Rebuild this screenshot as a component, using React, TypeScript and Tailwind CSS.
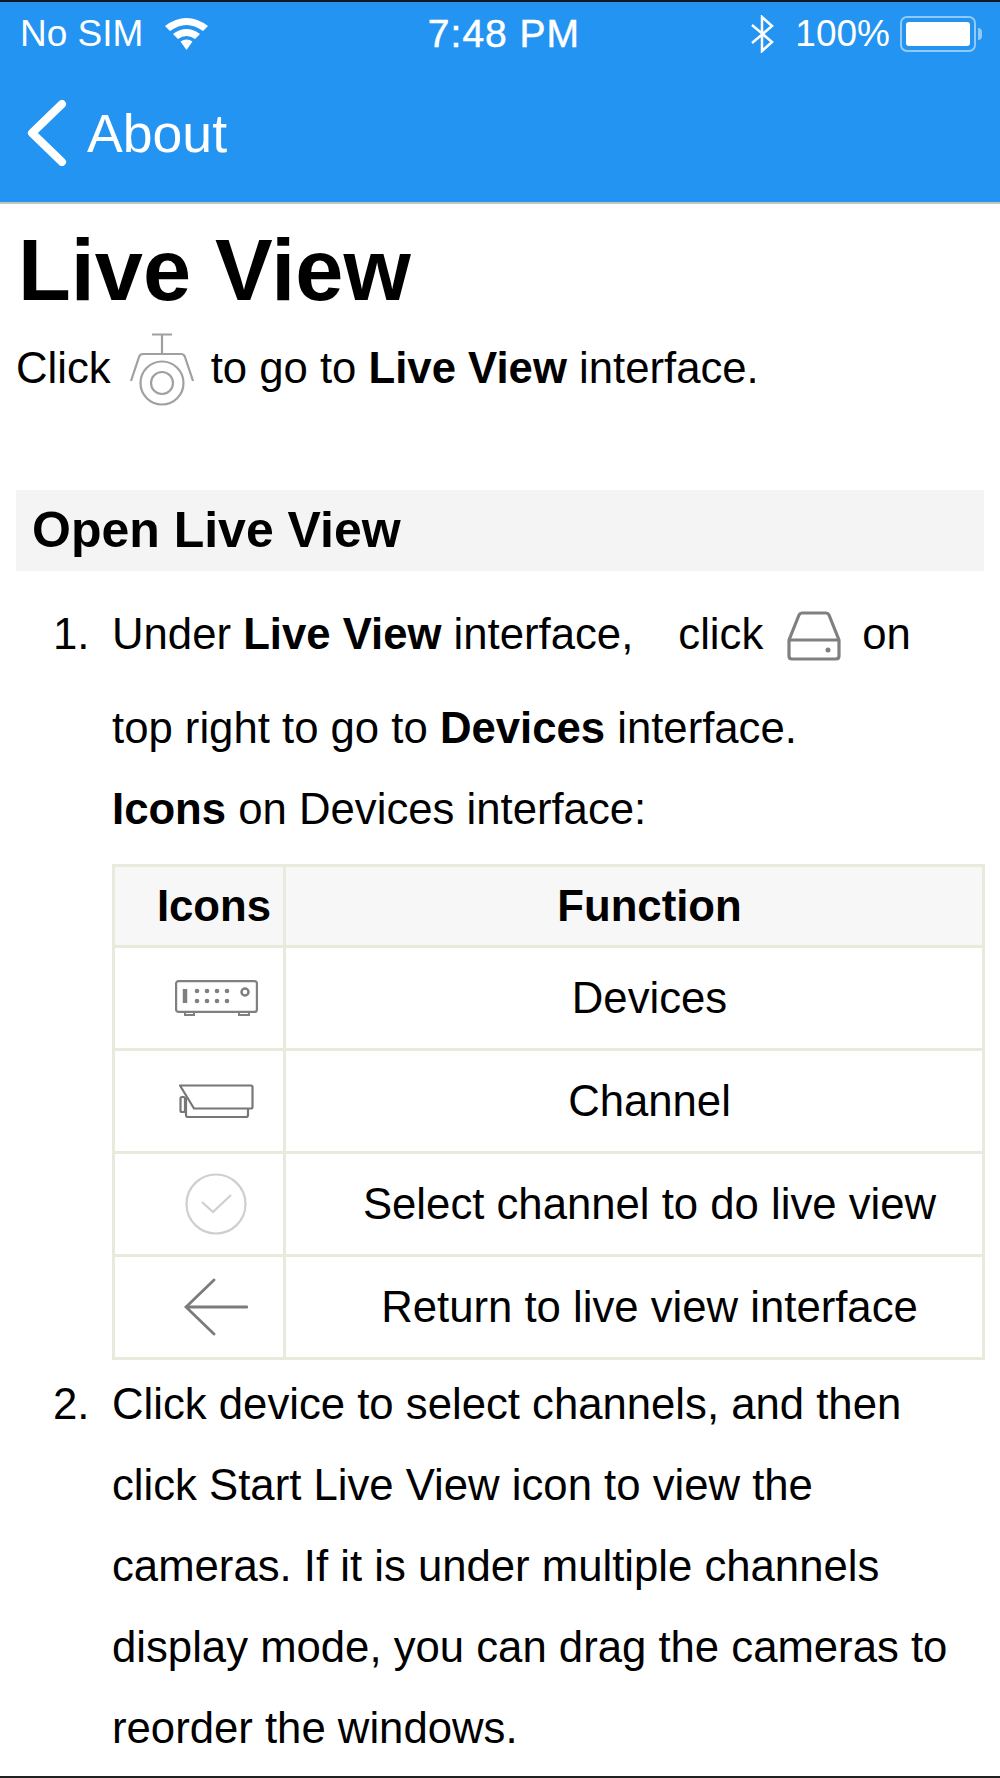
function CameraIcon() {
  return (
    <svg width="64" height="74" viewBox="0 0 64 74" fill="none" stroke="#a0a0a0" strokeWidth="2.2" className="mt-[4px] mr-[17px] ml-[19px] inline-block shrink-0">
      <path d="M22 1.500h20M32 1.500V21" />
      <path d="M1 48 9 24q1-3 4-3h38q3 0 4 3l8 24" />
      <circle cx="32" cy="50" r="21.500" />
      <circle cx="32" cy="50" r="11" />
    </svg>
  );
}

function DriveIcon() {
  return (
    <svg width="54" height="50" viewBox="0 0 54 50" fill="none" stroke="#808080" strokeWidth="3.2" className="shrink-0">
      <path d="M2 29 12 4q1-2 3-2h24q2 0 3 2l10 25v16q0 3-3 3H5q-3 0-3-3z" strokeLinejoin="round" />
      <path d="M2 29h50" />
      <circle cx="41" cy="39" r="2.500" fill="#808080" stroke="none" />
    </svg>
  );
}

function DevicesIcon() {
  return (
    <svg width="83" height="37" viewBox="0 0 83 37" fill="none" stroke="#808080" strokeWidth="2.2">
      <rect x="1.100" y="1.100" width="80.800" height="30.800" rx="2.500" />
      <path d="M10 32v3h9v-3M64 32v3h10v-3" strokeWidth="2" />
      <path d="M10 9v14" strokeWidth="4.500" />
      <g fill="#808080" stroke="none">
        <circle cx="22" cy="11" r="2.300" />
        <circle cx="32" cy="11" r="2.300" />
        <circle cx="42" cy="11" r="2.300" />
        <circle cx="52" cy="11" r="2.300" />
        <circle cx="22" cy="21" r="2.300" />
        <circle cx="32" cy="21" r="2.300" />
        <circle cx="42" cy="21" r="2.300" />
        <circle cx="52" cy="21" r="2.300" />
      </g>
      <circle cx="70" cy="12" r="3.500" strokeWidth="2.500" />
    </svg>
  );
}

function ChannelIcon() {
  return (
    <svg width="75" height="35" viewBox="0 0 75 35" fill="none" stroke="#777777" strokeWidth="2.2">
      <path d="M1 1.500h71q1.500 0 1.500 1.500v20q0 1.500-1.500 1.500H15z" strokeLinejoin="round" />
      <path d="M7 14v17q0 2 2 2h58q2 0 2-2v-6" />
      <rect x="1.500" y="13" width="4.500" height="15" rx="1.500" />
    </svg>
  );
}

function CheckIcon() {
  return (
    <svg width="62" height="62" viewBox="0 0 62 62" fill="none" stroke="#cfcfcf" strokeWidth="2.2">
      <circle cx="31" cy="31" r="29.500" />
      <path d="M17 29 28 39 46 22" />
    </svg>
  );
}

function BackIcon() {
  return (
    <svg width="64" height="58" viewBox="0 0 64 58" fill="none" stroke="#7c7c7c" strokeWidth="2.800" strokeLinecap="round">
      <path d="M2 29h61M30 2 2 29l28 27" />
    </svg>
  );
}

function WifiIcon() {
  return (
    <svg width="43" height="32" viewBox="0 0 43 32" fill="white">
      <path d="M0 8Q21.500-8 43 8l-5 5Q21.500 1 5 13z" />
      <path d="M8 16Q21.500 6 35 16l-5 5Q21.500 15 13 21z" />
      <path d="M15.500 23.500Q21.500 19.500 27.500 23.500L21.500 32z" />
    </svg>
  );
}

function Row({ icon, label }: { icon: React.ReactNode; label: string }) {
  return (
    <tr className="h-[103px]">
      <td className="border-[3px] border-[#e9e9dc] pl-[34px] align-middle">
        <div className="flex items-center justify-center">{icon}</div>
      </td>
      <td className="border-[3px] border-[#e9e9dc] pl-[31px] text-center align-middle">{label}</td>
    </tr>
  );
}

export default function App() {
  return (
    <div className="h-[1778px] w-[1000px] overflow-hidden border-b-2 border-b-[#202020] bg-white font-['Liberation_Sans',Arial,sans-serif] text-[43.7px] text-black">
      {/* Status + nav bar */}
      <header className="h-[204px] border-t-2 border-b-2 border-t-[#101820] border-b-[#c4c4c4] bg-[#2394f1] text-white">
        <div className="grid h-[64px] grid-cols-3 items-center pr-[18px] pl-[20px] text-[37px]">
          <div className="flex items-center gap-[22px]">
            <span>No SIM</span>
            <WifiIcon />
          </div>
          <span className="pl-[6px] text-center text-[39px] tracking-[1px] [-webkit-text-stroke:0.5px_white]">7:48 PM</span>
          <div className="flex items-center justify-end">
            <svg width="24" height="38" viewBox="0 0 24 38" fill="none" stroke="white" strokeWidth="2.500" className="mr-[21px]">
              <path d="M2 10 22 27 12 36V2l10 9L2 28" />
            </svg>
            <span>100%</span>
            <div className="ml-[10px] flex h-[36px] w-[76px] items-center rounded-[7px] border-2 border-white/50 p-[4px]">
              <div className="h-full w-full rounded-[3px] bg-white" />
            </div>
            <div className="ml-[2px] h-[12px] w-[4px] rounded-r bg-white/50" />
          </div>
        </div>
        <div className="flex h-[134px] items-center pl-[27px] text-[53.6px]">
          <svg width="40" height="66" viewBox="0 0 40 66" fill="none" stroke="white" strokeWidth="8" strokeLinecap="round" strokeLinejoin="round">
            <path d="M35 4 5 33l30 29" />
          </svg>
          <span className="ml-[20px]">About</span>
        </div>
      </header>

      <main className="px-[16px]">
        <h1 className="mt-[20px] pl-[2px] text-[86.500px] leading-[92px] font-bold">Live View</h1>
        <p className="mt-[12px] flex h-[80px] items-center">
          Click
          <CameraIcon />
          <span>
            to go to <b>Live View</b> interface.
          </span>
        </p>

        <h2 className="mt-[82px] flex h-[81px] items-center bg-[#f4f4f4] pl-[16px] text-[50px] font-bold">Open Live View</h2>

        <ol className="mt-[16px]">
          <li className="flex">
            <span className="flex h-[94px] w-[96px] shrink-0 items-center pl-[37px]">1.</span>
            <div className="min-w-0 flex-1">
              <div className="flex h-[94px] items-center">
                <span>
                  Under <b>Live View</b> interface,
                </span>
                <span className="ml-[45px]">click</span>
                <span className="mr-[21px] ml-[24px] pt-[4px]">
                  <DriveIcon />
                </span>
                <span>on</span>
              </div>
              <div className="flex h-[94px] items-center">
                <span>
                  top right to go to <b>Devices</b> interface.
                </span>
              </div>
              <div className="flex h-[68px] items-center">
                <span>
                  <b>Icons</b> on Devices interface:
                </span>
              </div>
              <table className="mt-[21px] w-[873px] table-fixed border-collapse">
                <colgroup>
                  <col className="w-[171px]" />
                  <col />
                </colgroup>
                <thead>
                  <tr className="h-[81px] bg-[#f7f7f7]">
                    <th className="border-[3px] border-[#e9e9dc] pr-[12px] text-right font-bold">Icons</th>
                    <th className="border-[3px] border-[#e9e9dc] pl-[31px] text-center font-bold">Function</th>
                  </tr>
                </thead>
                <tbody>
                  <Row icon={<DevicesIcon />} label="Devices" />
                  <Row icon={<ChannelIcon />} label="Channel" />
                  <Row icon={<CheckIcon />} label="Select channel to do live view" />
                  <Row icon={<BackIcon />} label="Return to live view interface" />
                </tbody>
              </table>
            </div>
          </li>
          <li className="mt-[3px] flex leading-[81px]">
            <span className="w-[96px] shrink-0 pl-[37px]">2.</span>
            <div className="w-[870px]">
              Click device to select channels, and then click Start Live View icon to view the cameras. If it is under multiple channels display mode, you can drag the cameras to reorder the windows.
            </div>
          </li>
        </ol>
      </main>
    </div>
  );
}
